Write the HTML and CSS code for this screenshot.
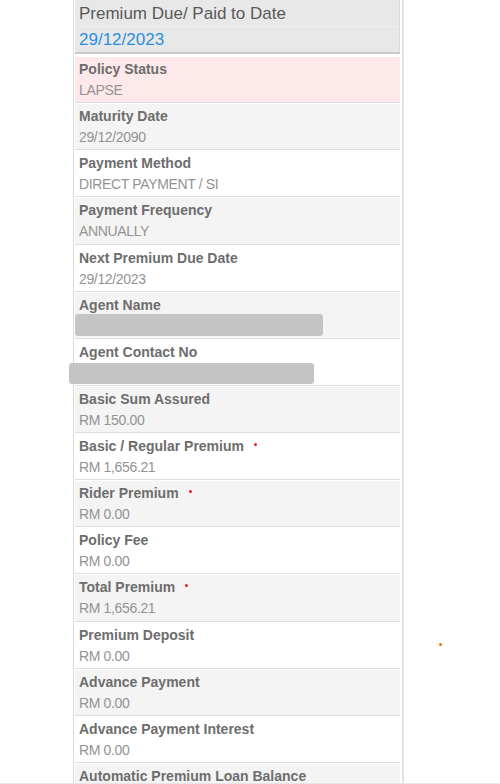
FILE: index.html
```html
<!DOCTYPE html>
<html lang="en">
<head>
<meta charset="utf-8">
<title>Policy Details</title>
<link rel="stylesheet" href="styles.css">
</head>
<body>
<div class="sheet">
  <div class="due">
    <div class="due-title">Premium Due/ Paid to Date</div>
    <div class="due-date">29/12/2023</div>
  </div>
  <div class="row row-alert"><div class="label">Policy Status</div><div class="value">LAPSE</div></div>
  <div class="row row-shade"><div class="label">Maturity Date</div><div class="value">29/12/2090</div></div>
  <div class="row"><div class="label">Payment Method</div><div class="value">DIRECT PAYMENT / SI</div></div>
  <div class="row row-shade"><div class="label">Payment Frequency</div><div class="value">ANNUALLY</div></div>
  <div class="row"><div class="label">Next Premium Due Date</div><div class="value">29/12/2023</div></div>
  <div class="row row-shade"><div class="label">Agent Name</div><div class="redact redact-name"></div></div>
  <div class="row"><div class="label">Agent Contact No</div><div class="redact redact-contact"></div></div>
  <div class="row row-shade"><div class="label">Basic Sum Assured</div><div class="value">RM 150.00</div></div>
  <div class="row"><div class="label label-marked">Basic / Regular Premium</div><div class="value">RM 1,656.21</div></div>
  <div class="row row-shade"><div class="label label-marked">Rider Premium</div><div class="value">RM 0.00</div></div>
  <div class="row"><div class="label">Policy Fee</div><div class="value">RM 0.00</div></div>
  <div class="row row-shade"><div class="label label-marked">Total Premium</div><div class="value">RM 1,656.21</div></div>
  <div class="row"><div class="label">Premium Deposit</div><div class="value">RM 0.00</div></div>
  <div class="row row-shade"><div class="label">Advance Payment</div><div class="value">RM 0.00</div></div>
  <div class="row"><div class="label">Advance Payment Interest</div><div class="value">RM 0.00</div></div>
  <div class="row row-shade"><div class="label">Automatic Premium Loan Balance</div><div class="value">RM 0.00</div></div>
</div>
<span class="stray-dot"></span>
<div class="toolbar"></div>
</body>
</html>
```

FILE: styles.css
```css
html, body {
  margin: 0;
  padding: 0;
  background: #ffffff;
  overflow: hidden;
}

body {
  font-family: "Liberation Sans", Arial, Helvetica, sans-serif;
  height: 784px;
}

.sheet {
  margin-left: 73px;
  width: 325px;
  border-left: 1px solid #dcdcdc;
  border-right: 2px solid #e2e2e2;
  padding-left: 1px;
  padding-right: 2px;
  box-sizing: content-box;
}

.due {
  background: #e8e8e8;
  padding-top: 2px;
  padding-left: 4px;
  border-bottom: 2px solid #c9c9c9;
  border-right: 1px solid #d9d9d9;
  margin-bottom: 3px;
}

.due-title {
  font-size: 17px;
  line-height: 24px;
  color: #585858;
  border-bottom: 1px solid #efefef;
}

.due-date {
  font-size: 17px;
  line-height: 25px;
  color: #2890df;
}

.row {
  height: 46.13px;
  box-sizing: border-box;
  padding: 3px 0 0 4px;
  background: #ffffff;
  border-bottom: 1px solid #dedede;
  margin-bottom: 1px;
}

.row-shade {
  background: #f4f4f4;
}

.row-alert {
  background: #fde9e9;
}

.label {
  font-size: 14px;
  font-weight: bold;
  line-height: 18px;
  color: #6d6d6d;
}

.label-marked::after {
  content: "";
  display: inline-block;
  width: 3px;
  height: 3px;
  border-radius: 50%;
  background: #f21c1c;
  margin-left: 10px;
  vertical-align: 5px;
}

.value {
  font-size: 14px;
  letter-spacing: -0.35px;
  line-height: 24px;
  color: #939393;
}

.redact {
  height: 22px;
  background: #c4c4c4;
  border-radius: 3px;
}

.redact-name {
  margin-left: -4px;
  width: 248px;
}

.redact-contact {
  margin-top: 2px;
  margin-left: -10px;
  width: 245px;
  height: 21px;
}

.stray-dot {
  position: absolute;
  left: 439px;
  top: 643px;
  width: 3px;
  height: 3px;
  border-radius: 50%;
  background: #ff6a00;
}

.toolbar {
  position: fixed;
  left: 0;
  right: 0;
  bottom: 0;
  height: 1px;
  background: #e6e6e6;
  box-shadow: 0 -3px 6px rgba(0, 0, 0, 0.03);
}
```
